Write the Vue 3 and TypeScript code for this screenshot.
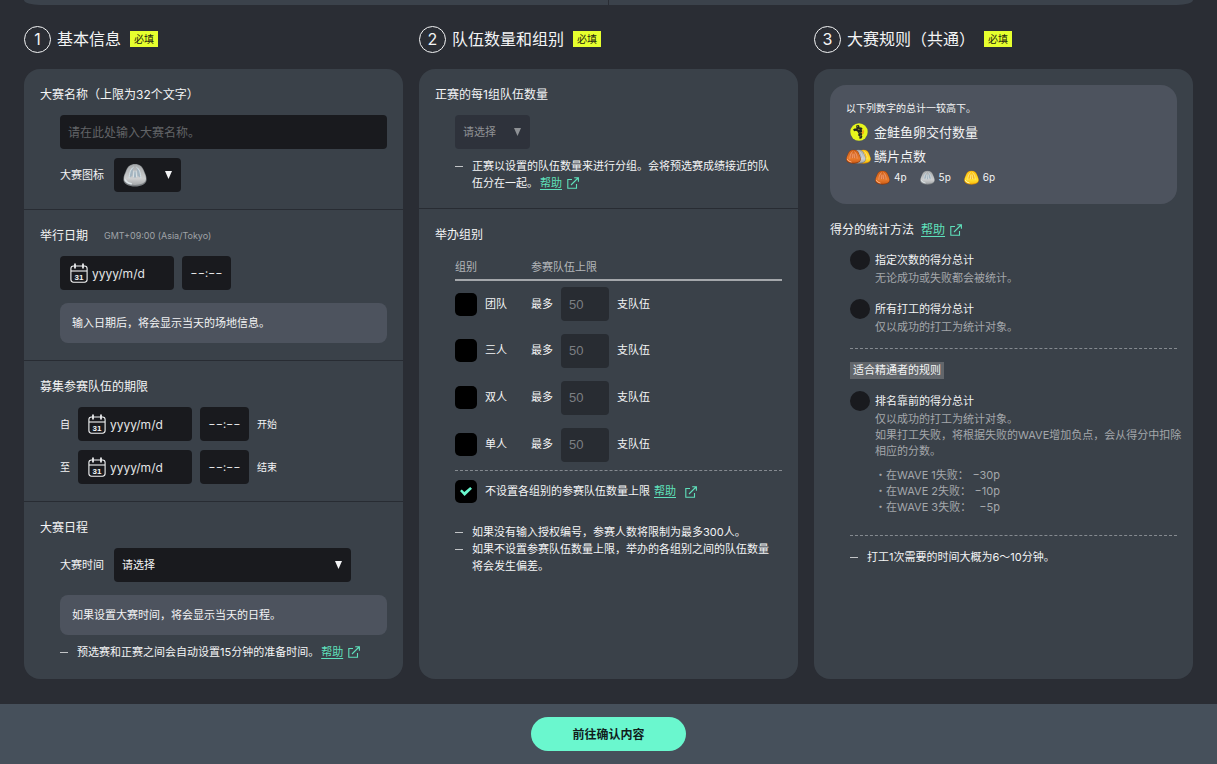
<script setup lang="ts">
import { reactive, ref } from 'vue'

interface Metal { id: string; light: string; mid: string; dark: string; rib: string; pane: string; point: string }
interface Division { id: string; name: string; checked: boolean; limit: string }

const metals: Metal[] = [
  { id: 'bronze', light: '#e87a2c', mid: '#cf5f18', dark: '#8f3a0c', rib: '#ffb48a', pane: '#d8703a', point: '4p' },
  { id: 'silver', light: '#cdcecf', mid: '#a6a9ab', dark: '#7c8084', rib: '#dde5e9', pane: '#a2b4c0', point: '5p' },
  { id: 'gold', light: '#ffe030', mid: '#fbc010', dark: '#d38300', rib: '#fff8c0', pane: '#f8b820', point: '6p' },
]

const divisions = reactive<Division[]>([
  { id: 'team', name: '团队', checked: false, limit: '' },
  { id: 'trio', name: '三人', checked: false, limit: '' },
  { id: 'pair', name: '双人', checked: false, limit: '' },
  { id: 'solo', name: '单人', checked: false, limit: '' },
])

const periods = [
  { id: 'from', before: '自', after: '开始' },
  { id: 'to', before: '至', after: '结束' },
]

const penalties = [
  { wave: '在WAVE 1失败：', value: '−30p' },
  { wave: '在WAVE 2失败：', value: '−10p' },
  { wave: '在WAVE 3失败：', value: '−5p' },
]

const title = ref('')
const noLimit = ref(true)
const method = ref('')
</script>

<template>
  <div class="page">
    <svg class="defs" aria-hidden="true">
      <defs>
        <template v-for="m in metals" :key="m.id">
          <linearGradient :id="'fill-' + m.id" x1="0" y1="0" x2="0" y2="1">
            <stop offset="0" :stop-color="m.mid" />
            <stop offset="0.7" :stop-color="m.light" />
            <stop offset="1" :stop-color="m.mid" />
          </linearGradient>
          <symbol :id="'scale-' + m.id" viewBox="0 0 24 24">
            <path d="M12 1C7.4 1 4.6 3.2 3 7.6C1.8 10.8 .4 13 .4 16.4C.4 21.2 6 23.4 12 23.4S23.6 21.2 23.6 16.4C23.6 13 22.2 10.8 21 7.6C19.4 3.2 16.6 1 12 1Z" :fill="m.dark" />
            <path d="M12 1.4C7.7 1.4 5 3.6 3.5 7.8C2.4 10.9 1 13 1 15.8C1 20 6.2 21.9 12 21.9S23 20 23 15.8C23 13 21.6 10.9 20.5 7.8C19 3.6 16.3 1.4 12 1.4Z" :fill="'url(#fill-' + m.id + ')'" />
            <path d="M10.2 4.2L9.4 12.8L6.2 15C6.2 10.4 7.4 5.8 10.2 4.2ZM13.8 4.2L14.6 12.8L17.8 15C17.8 10.4 16.6 5.8 13.8 4.2ZM10.8 8.4H13.2L13.6 14.6H10.4Z" :fill="m.pane" />
            <path d="M10.2 4.4C7.6 5.8 6.4 10 6.2 14.8M13.8 4.4C16.4 5.8 17.6 10 17.8 14.8M10.9 8L10.4 14M13.1 8L13.6 14" fill="none" :stroke="m.rib" stroke-width=".9" stroke-linecap="round" />
            <path d="M2.2 16.8Q3.8 20 8.2 20.8" fill="none" :stroke="m.rib" stroke-width="1.5" stroke-linecap="round" />
          </symbol>
        </template>
        <symbol id="external" viewBox="0 0 12 12">
          <path d="M5 2.5H.8V11.3H9.5V7M4 8L11 1M7.2 .7H11.4V4.8" fill="none" stroke="currentColor" stroke-width="1.1" />
        </symbol>
        <symbol id="calendar" viewBox="0 0 18 20">
          <rect x=".9" y="3" width="16.2" height="16.2" rx="2.6" fill="none" stroke="currentColor" stroke-width="1.1" />
          <path d="M1 8H17" fill="none" stroke="currentColor" stroke-width="1.1" />
          <path d="M5 .5V5.4M13 .5V5.4" fill="none" stroke="currentColor" stroke-width="1.7" />
          <text x="9" y="16.6" text-anchor="middle" class="cal-day">31</text>
        </symbol>
      </defs>
    </svg>

    <div class="banner"><span></span><span></span></div>

    <main class="columns">
      <section class="column">
        <h2 class="step"><span class="num">1</span>基本信息<em class="must">必填</em></h2>
        <div class="card">
          <div class="part">
            <h3><label for="title">大赛名称（上限为32个文字）</label></h3>
            <div class="inset stack">
              <input id="title" v-model="title" class="field" type="text" maxlength="32" placeholder="请在此处输入大赛名称。">
              <div class="line">
                <span id="icon-label" class="lead">大赛图标</span>
                <button class="icon-pick" type="button" aria-labelledby="icon-label">
                  <svg class="pick-scale"><use href="#scale-silver" /></svg>
                  <span class="arrow"></span>
                </button>
              </div>
            </div>
          </div>

          <div class="part">
            <h3><label for="day">举行日期</label><small>GMT+09:00 (Asia/Tokyo)</small></h3>
            <div class="inset">
              <div class="line">
                <label class="date"><svg class="cal"><use href="#calendar" /></svg><input id="day" type="text" placeholder="yyyy/m/d"></label>
                <input class="time" type="text" placeholder="−−:−−" aria-label="举行时间">
              </div>
              <p class="info">输入日期后，将会显示当天的场地信息。</p>
            </div>
          </div>

          <div class="part">
            <h3>募集参赛队伍的期限</h3>
            <div class="inset stack">
              <div v-for="p in periods" :key="p.id" class="line period">
                <label :for="'date-' + p.id">{{ p.before }}</label>
                <label class="date"><svg class="cal"><use href="#calendar" /></svg><input :id="'date-' + p.id" type="text" placeholder="yyyy/m/d"></label>
                <input :id="'time-' + p.id" class="time" type="text" placeholder="−−:−−">
                <label :for="'time-' + p.id">{{ p.after }}</label>
              </div>
            </div>
          </div>

          <div class="part">
            <h3>大赛日程</h3>
            <div class="inset">
              <div class="line">
                <label for="length" class="lead">大赛时间</label>
                <span class="select long"><select id="length"><option>请选择</option></select><span class="arrow"></span></span>
              </div>
              <p class="info">如果设置大赛时间，将会显示当天的日程。</p>
              <ul class="notes">
                <li>预选赛和正赛之间会自动设置15分钟的准备时间。<a href="#help">帮助</a><svg class="ext"><use href="#external" /></svg></li>
              </ul>
            </div>
          </div>
        </div>
      </section>

      <section class="column">
        <h2 class="step"><span class="num">2</span>队伍数量和组别<em class="must">必填</em></h2>
        <div class="card">
          <div class="part tight">
            <h3><label for="per-group">正赛的每1组队伍数量</label></h3>
            <div class="inset stack">
              <span class="select short"><select id="per-group" disabled><option>请选择</option></select><span class="arrow"></span></span>
              <ul class="notes narrow">
                <li>正赛以设置的队伍数量来进行分组。会将预选赛成绩接近的队伍分在一起。<a href="#help">帮助</a><svg class="ext"><use href="#external" /></svg></li>
              </ul>
            </div>
          </div>

          <div class="part">
            <h3>举办组别</h3>
            <div class="inset">
              <table class="divisions">
                <thead><tr><th>组别</th><th>参赛队伍上限</th></tr></thead>
                <tbody>
                  <tr v-for="d in divisions" :key="d.id">
                    <td><label class="check"><input v-model="d.checked" type="checkbox">{{ d.name }}</label></td>
                    <td><label class="limit">最多<input v-model="d.limit" type="text" placeholder="50" disabled>支队伍</label></td>
                  </tr>
                </tbody>
              </table>
              <div class="line unlimited">
                <label class="check"><input v-model="noLimit" type="checkbox">不设置各组别的参赛队伍数量上限</label>
                <a href="#help">帮助</a><svg class="ext"><use href="#external" /></svg>
              </div>
              <ul class="notes narrow after">
                <li>如果没有输入授权编号，参赛人数将限制为最多300人。</li>
                <li>如果不设置参赛队伍数量上限，举办的各组别之间的队伍数量将会发生偏差。</li>
              </ul>
            </div>
          </div>
        </div>
      </section>

      <section class="column">
        <h2 class="step"><span class="num">3</span>大赛规则（共通）<em class="must">必填</em></h2>
        <div class="card">
          <div class="part rules">
            <div class="summary">
              <p>以下列数字的总计一较高下。</p>
              <div class="count">
                <span class="pic">
                  <svg class="egg" viewBox="0 0 18 18">
                    <circle cx="9" cy="9" r="8.7" fill="#e6f51c" />
                    <path d="M6.2 2.6L8.4 1.9L9.6 3L9.2 4.2L11.4 4.4L12.6 5.6L11.6 6.8L12.4 8.4L11.4 9.4L12.4 11L11.6 12.2L12.4 13.8L11.2 15.8L9.2 15.4L9.6 13.4L8 12.2L8.6 10.4L7.4 8.6L6 7.8L4.2 8.2L3 6.6L4.6 5.6L6.4 5.4Z" fill="#24261f" />
                    <path d="M12.4 5.8L14.2 8L13.8 10.6L12.2 11.4L11.6 9.4L12.5 8.4Z" fill="#f7a61b" />
                    <path d="M7 3.6H8.2M7.8 6.2L9.6 6.6M9.4 9.6L10.6 9.8M10 12.8L11 13" fill="none" stroke="#aaa63a" stroke-width=".7" />
                  </svg>
                </span>
                金鲑鱼卵交付数量
              </div>
              <div class="count">
                <span class="pic trio">
                  <svg><use href="#scale-bronze" /></svg>
                  <svg><use href="#scale-silver" /></svg>
                  <svg><use href="#scale-gold" /></svg>
                </span>
                鳞片点数
              </div>
              <ul class="points">
                <li v-for="m in metals" :key="m.id"><svg><use :href="'#scale-' + m.id" /></svg>{{ m.point }}</li>
              </ul>
            </div>

            <h3>得分的统计方法<a href="#help">帮助</a><svg class="ext"><use href="#external" /></svg></h3>
            <div class="methods">
              <label class="radio">
                <input v-model="method" type="radio" name="method" value="count">
                <span>指定次数的得分总计<small>无论成功或失败都会被统计。</small></span>
              </label>
              <label class="radio">
                <input v-model="method" type="radio" name="method" value="all">
                <span>所有打工的得分总计<small>仅以成功的打工为统计对象。</small></span>
              </label>
              <div class="expert">
                <span class="tag">适合精通者的规则</span>
                <label class="radio">
                  <input v-model="method" type="radio" name="method" value="top">
                  <span>排名靠前的得分总计<small>仅以成功的打工为统计对象。<br>如果打工失败，将根据失败的WAVE增加负点，会从得分中扣除相应的分数。</small></span>
                </label>
                <ul class="penalties">
                  <li v-for="p in penalties" :key="p.wave"><span>・{{ p.wave }}</span><span>{{ p.value }}</span></li>
                </ul>
              </div>
              <ul class="notes duration">
                <li>打工1次需要的时间大概为6～10分钟。</li>
              </ul>
            </div>
          </div>
        </div>
      </section>
    </main>

    <footer class="bar">
      <button class="go" type="button">前往确认内容</button>
    </footer>
  </div>
</template>

<style>
body {
  background: #2a2d34;
}
</style>

<style scoped>
* {
  box-sizing: border-box;
}
.page {
  min-height: 100vh;
  display: flex;
  flex-direction: column;
  background: #2a2d34;
  color: #f3f4f5;
  font-family: Inter, "Noto Sans CJK SC", sans-serif;
  font-size: 11px;
  line-height: 17px;
}
.defs {
  position: absolute;
  width: 0;
  height: 0;
}
h2, h3, p, ul {
  margin: 0;
  padding: 0;
  font-weight: 400;
}
ul {
  list-style: none;
}
input, button, select {
  font: inherit;
  color: inherit;
  border: 0;
  margin: 0;
  min-width: 0;
}
a {
  color: #5fe0bb;
  text-underline-offset: 2px;
}
.banner {
  height: 5px;
  margin: 0 24px;
  display: flex;
  gap: 1px;
}
.banner span {
  flex: 1;
  background: #3b424b;
}
.banner span:first-child {
  border-bottom-left-radius: 16px 5px;
}
.banner span:last-child {
  border-bottom-right-radius: 16px 5px;
}
.columns {
  flex: 1;
  display: grid;
  grid-template-columns: repeat(3, minmax(0, 1fr));
  gap: 16px;
  padding: 20px 24px 25px;
}
.column {
  display: flex;
  flex-direction: column;
  gap: 16px;
}
.step {
  display: flex;
  align-items: center;
  height: 28px;
  font-size: 16px;
}
.num {
  width: 27px;
  height: 27px;
  margin-right: 6px;
  border: 1px solid #f3f4f5;
  border-radius: 50%;
  text-align: center;
  line-height: 25px;
}
.must {
  margin-left: 9px;
  padding: 0 4px;
  background: #e6ff2e;
  color: #22250f;
  font-size: 10px;
  line-height: 16px;
  font-style: normal;
}
.card {
  flex: 1;
  border-radius: 16px;
  background: #3a4149;
}
.part {
  padding: 16px 16px 17px;
  border-bottom: 1px solid #282c33;
}
.part.tight {
  padding-bottom: 16px;
}
.part:last-child {
  border-bottom: 0;
}
h3 {
  display: flex;
  align-items: center;
  margin-bottom: 10px;
  font-size: 12px;
  line-height: 20px;
}
h3 small {
  margin-left: 16px;
  color: #a0a4a8;
  font-size: 9px;
}
h3 a {
  margin-left: 7px;
}
.inset {
  padding-left: 20px;
}
.stack {
  display: flex;
  flex-direction: column;
  gap: 9px;
}
.line {
  display: flex;
  align-items: center;
  gap: 8px;
}
.lead {
  width: 46px;
}
.field, .date, .time, .icon-pick, .select {
  height: 34px;
  border-radius: 4px;
  background: #191a1e;
}
.field {
  width: 100%;
  padding: 0 8px;
  font-size: 12px;
}
.field::placeholder {
  color: #626467;
}
.icon-pick {
  display: flex;
  align-items: center;
  justify-content: space-between;
  width: 67px;
  padding: 0 9px;
}
.pick-scale {
  width: 24px;
  height: 24px;
}
.arrow {
  width: 7px;
  height: 8px;
  background: currentColor;
  clip-path: polygon(0 0, 100% 0, 50% 100%);
}
.date {
  display: flex;
  align-items: center;
  gap: 4px;
  width: 114px;
  padding: 0 10px;
}
.date input {
  flex: 1;
  padding: 0;
  background: none;
  font-size: 12px;
}
.cal {
  width: 18px;
  height: 20px;
}
.cal-day {
  fill: currentColor;
  font-family: "Liberation Sans", sans-serif;
  font-size: 8px;
  font-weight: 700;
}
.date input::placeholder, .time::placeholder {
  color: #e4e5e6;
}
.time {
  width: 49px;
  padding: 0;
  font-size: 11px;
  text-align: center;
}
.period {
  font-size: 10px;
}
.info {
  margin-top: 13px;
  padding: 0 12px;
  border-radius: 8px;
  background: #4d535e;
  line-height: 40px;
}
.info + .notes {
  margin-top: 9px;
}
.select {
  display: flex;
  align-items: center;
  padding: 0 9px 0 8px;
}
.select select {
  flex: 1;
  height: 34px;
  padding: 0;
  background: none;
  appearance: none;
  opacity: 1;
}
.long {
  width: 237px;
}
.short {
  width: 75px;
  background: #2e323b;
  color: #8e9195;
}
.notes li {
  position: relative;
  padding-left: 17px;
}
.notes a {
  margin-left: 2px;
}
.notes.narrow {
  padding-right: 8px;
}
.notes li::before {
  content: "";
  position: absolute;
  left: 0;
  top: 8px;
  width: 8px;
  height: 1px;
  background: #c2c4c7;
}
.ext {
  width: 12px;
  height: 12px;
  margin-left: 5px;
  color: #5fe0bb;
  vertical-align: -2px;
}
.divisions {
  width: 100%;
  border-collapse: collapse;
  color: #f3f4f5;
}
.divisions th, .divisions td {
  padding: 0;
  text-align: left;
}
.divisions th {
  height: 25px;
  border-bottom: 2px solid #a4a7ab;
  color: #b3b6b9;
  font-weight: 400;
}
.divisions th:first-child {
  width: 76px;
}
.divisions td {
  height: 47px;
}
.check, .limit {
  display: flex;
  align-items: center;
  gap: 8px;
}
.check input {
  flex: none;
  appearance: none;
  width: 22px;
  height: 23px;
  border-radius: 5px;
  background: #000;
}
.check input:checked {
  display: grid;
  place-items: center;
}
.check input:checked::before {
  content: "";
  width: 12px;
  height: 9px;
  background: #6af7ce;
  clip-path: polygon(0 45%, 15% 27%, 36% 55%, 85% 0, 100% 20%, 38% 100%);
}
.limit input {
  width: 48px;
  height: 34px;
  padding: 0 8px;
  border-radius: 4px;
  background: #282c32;
  font-family: "Liberation Sans", sans-serif;
  font-size: 13px;
}
.limit input::placeholder {
  color: #7c7f83;
}
.unlimited {
  gap: 4px;
  margin-top: 2px;
  padding-top: 9px;
  border-top: 1px dashed #858a90;
}
.after {
  margin-top: 21px;
}
.summary {
  margin-bottom: 16px;
  padding: 15px 16px 18px;
  border-radius: 16px;
  background: #4d535e;
}
.summary p {
  font-size: 10px;
}
.count {
  display: flex;
  align-items: center;
  gap: 4px;
  height: 24px;
  font-size: 13px;
}
.summary p + .count {
  margin-top: 3px;
}
.pic {
  display: flex;
  width: 24px;
}
.egg {
  width: 18px;
  height: 18px;
  margin-left: 4px;
}
.trio svg {
  flex: none;
  width: 15px;
  height: 15px;
}
.trio svg + svg {
  margin-left: -10px;
}
.trio svg:first-child {
  position: relative;
  z-index: 2;
}
.trio svg:nth-child(2) {
  position: relative;
  z-index: 1;
}
.points {
  display: flex;
  gap: 13px;
  padding-left: 29px;
}
.points li {
  display: flex;
  align-items: center;
  gap: 4px;
  height: 18px;
  font-size: 10px;
}
.points svg {
  width: 15px;
  height: 15px;
}
.rules {
  padding-bottom: 0;
}
.methods {
  padding-left: 20px;
}
.radio {
  display: flex;
  gap: 5px;
  margin-bottom: 13px;
  line-height: 20px;
}
.radio input {
  flex: none;
  appearance: none;
  width: 20px;
  height: 20px;
  border-radius: 50%;
  background: #191a1e;
}
.radio input:checked {
  border: 6px solid #191a1e;
  background: #6af7ce;
}
.radio small {
  display: block;
  margin-right: -8px;
  color: #a4a7ab;
  font-size: 11px;
  line-height: 16px;
}
.expert {
  border-top: 1px dashed #858a90;
  border-bottom: 1px dashed #858a90;
  padding: 13px 0 20px;
}
.tag {
  display: inline-block;
  margin-bottom: 12px;
  padding: 0 3px;
  background: #62666b;
}
.expert .radio {
  margin-bottom: 8px;
}
.penalties {
  width: 125px;
  margin-left: 25px;
  color: #a4a7ab;
  line-height: 16px;
}
.penalties li {
  display: flex;
  justify-content: space-between;
  white-space: nowrap;
}
.duration {
  margin-top: 13px;
}
.bar {
  display: flex;
  justify-content: center;
  align-items: center;
  height: 60px;
  background: #46505b;
}
.go {
  width: 155px;
  height: 34px;
  border-radius: 17px;
  background: #6af7ce;
  color: #10201c;
  font-size: 12px;
  font-weight: 600;
}
</style>
